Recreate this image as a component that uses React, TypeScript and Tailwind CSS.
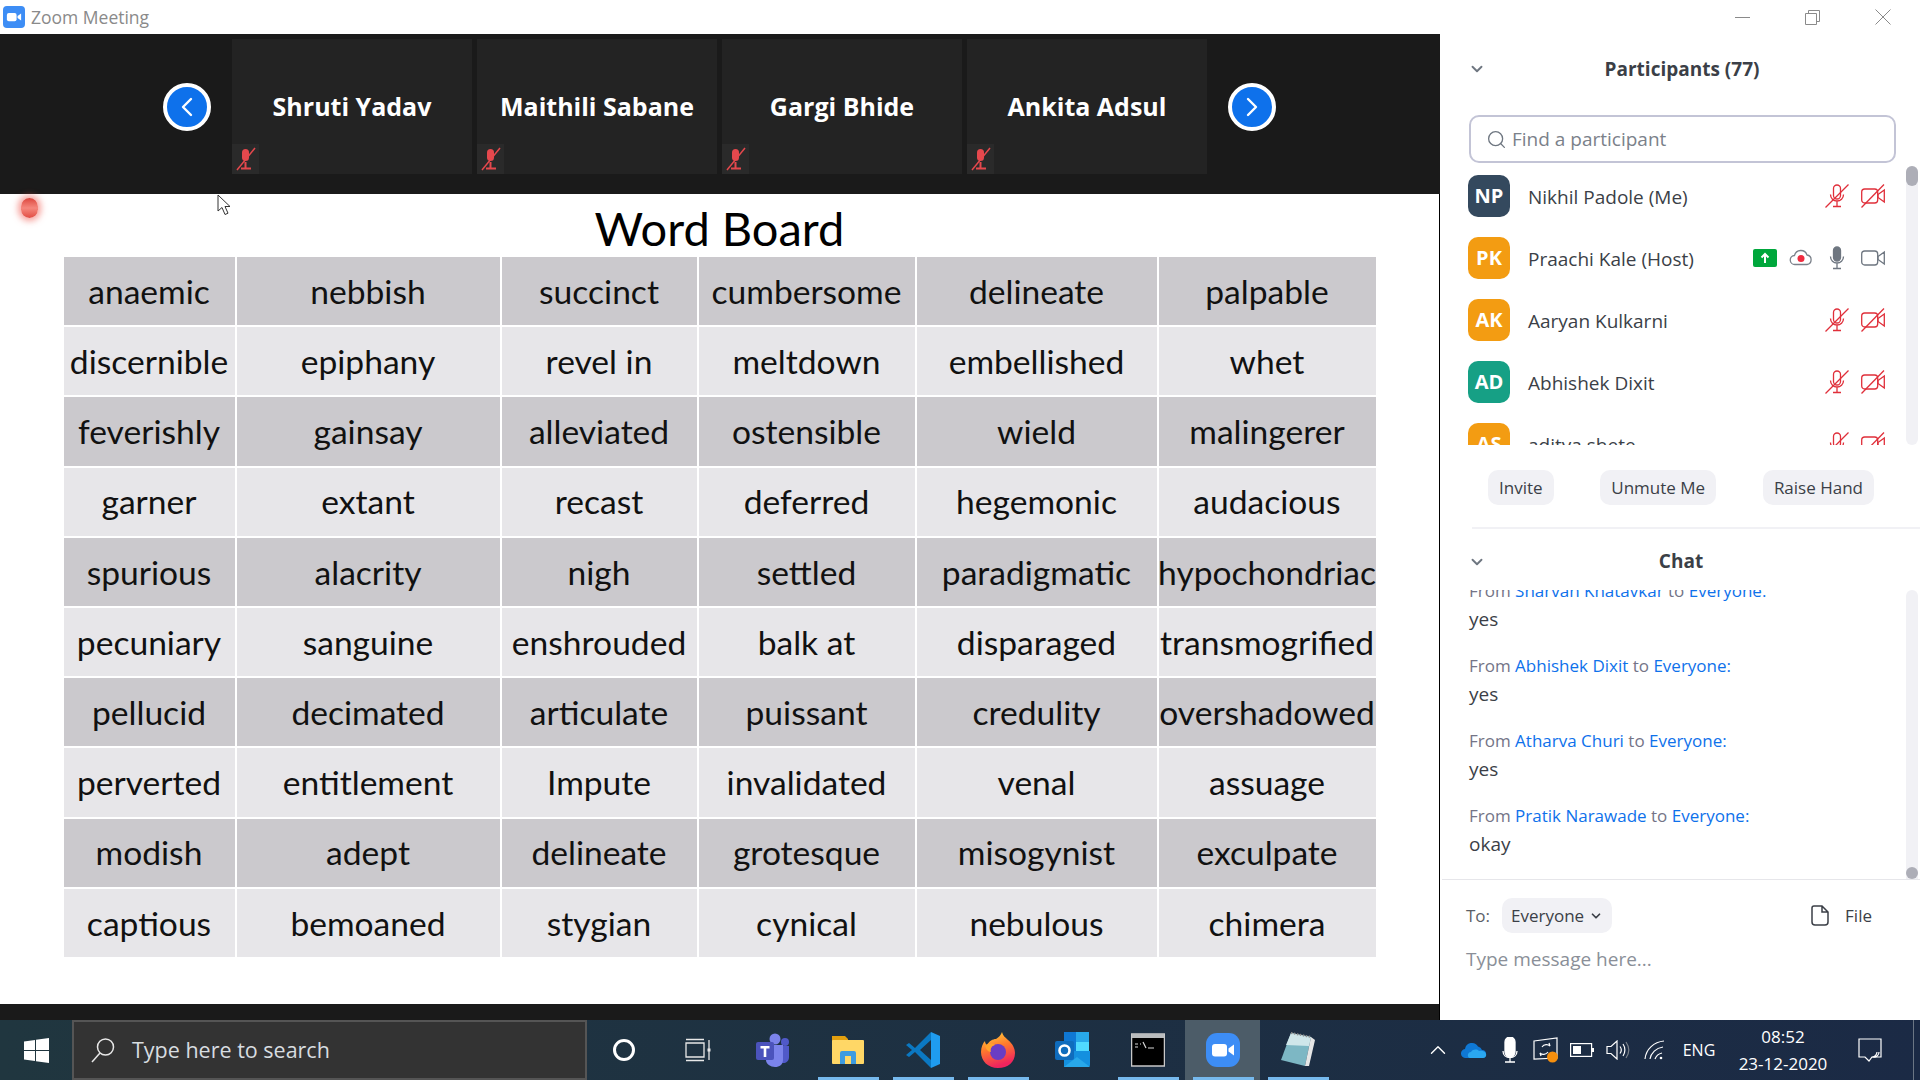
import { ChevronDown, ChevronLeft, ChevronRight, ChevronUp, Search } from 'lucide-react'

const ui = 'font-["Open_Sans",sans-serif]'

const words = [
  ['anaemic', 'nebbish', 'succinct', 'cumbersome', 'delineate', 'palpable'],
  ['discernible', 'epiphany', 'revel in', 'meltdown', 'embellished', 'whet'],
  ['feverishly', 'gainsay', 'alleviated', 'ostensible', 'wield', 'malingerer'],
  ['garner', 'extant', 'recast', 'deferred', 'hegemonic', 'audacious'],
  ['spurious', 'alacrity', 'nigh', 'settled', 'paradigmatic', 'hypochondriac'],
  ['pecuniary', 'sanguine', 'enshrouded', 'balk at', 'disparaged', 'transmogrified'],
  ['pellucid', 'decimated', 'articulate', 'puissant', 'credulity', 'overshadowed'],
  ['perverted', 'entitlement', 'Impute', 'invalidated', 'venal', 'assuage'],
  ['modish', 'adept', 'delineate', 'grotesque', 'misogynist', 'exculpate'],
  ['captious', 'bemoaned', 'stygian', 'cynical', 'nebulous', 'chimera'],
]

const thumbs = ['Shruti Yadav', 'Maithili Sabane', 'Gargi Bhide', 'Ankita Adsul']

const people = [
  { initials: 'NP', name: 'Nikhil Padole (Me)', color: 'bg-[#34495e]', host: false },
  { initials: 'PK', name: 'Praachi Kale (Host)', color: 'bg-[#f39c12]', host: true },
  { initials: 'AK', name: 'Aaryan Kulkarni', color: 'bg-[#f39c12]', host: false },
  { initials: 'AD', name: 'Abhishek Dixit', color: 'bg-[#16a085]', host: false },
  { initials: 'AS', name: 'aditya shete', color: 'bg-[#f39c12]', host: false },
]

const messages = [
  { from: 'Sharvan Khatavkar', text: 'yes' },
  { from: 'Abhishek Dixit', text: 'yes' },
  { from: 'Atharva Churi', text: 'yes' },
  { from: 'Pratik Narawade', text: 'okay' },
]

function ZoomLogo({ size, radius }: { size: number; radius: number }) {
  return (
    <svg width={size} height={size} viewBox="0 0 34 34">
      <rect width="34" height="34" rx={radius} fill="#3d8df5" />
      <rect x="6" y="11" width="15" height="12.5" rx="3" fill="#fff" />
      <path d="M22.5 15.5 28 11.5v11l-5.500-4z" fill="#fff" />
    </svg>
  )
}

function MutedMicSmall() {
  return (
    <svg width="22" height="24" viewBox="0 0 22 24" fill="none">
      <rect x="7" y="2" width="7" height="12" rx="3.500" fill="#e5484d" />
      <path d="M10.500 15v6M6 21.500h10" stroke="#e5484d" strokeWidth="2" />
      <path d="M20 1 2 23" stroke="#e5484d" strokeWidth="1.500" />
    </svg>
  )
}

function MicIcon({ muted }: { muted: boolean }) {
  const c = muted ? '#e02f3a' : '#6e7680'
  return (
    <svg width="24" height="24" viewBox="0 0 24 24" fill="none" stroke={c} strokeWidth="1.300">
      <rect x="8.500" y="1" width="7" height="14" rx="3.500" fill={muted ? 'none' : '#6e7680'} />
      <path d="M5.500 10.500c0 4 3 6.500 6.500 6.500s6.500-2.500 6.500-6.500M12 17v5M8 22.500h8" />
      {muted && <path d="M23.500 .5 .5 23.500" />}
    </svg>
  )
}

function VideoIcon({ muted }: { muted: boolean }) {
  const c = muted ? '#e02f3a' : '#6e7680'
  return (
    <svg width="24" height="24" viewBox="0 0 24 24" fill="none" stroke={c} strokeWidth="1.300">
      <rect x=".7" y="5" width="16" height="14" rx="3" />
      <path d="M17 10.500 23.300 6v12L17 13.500z" />
      {muted && <path d="M23 .5 .5 23.500" />}
    </svg>
  )
}

function TeamsIcon() {
  return (
    <svg width="36" height="36" viewBox="0 0 36 36">
      <circle cx="20" cy="7" r="5.500" fill="#7b83eb" />
      <circle cx="30" cy="10" r="4" fill="#5059c9" />
      <path d="M24 14h10v11c0 4-3 6-5.500 6S24 29 24 25z" fill="#5059c9" />
      <path d="M11 13h17v15c0 4.500-3.500 7-8 7s-9-3-9-7z" fill="#7b83eb" />
      <rect x="1" y="10" width="18" height="18" rx="2" fill="#4b53bc" />
      <path d="M5.500 14h9v2.500h-3.200V25H8.700v-8.500H5.500z" fill="#fff" />
    </svg>
  )
}

function FolderIcon() {
  return (
    <svg width="34" height="34" viewBox="0 0 34 34">
      <path d="M1 3h13l3 3v4H1z" fill="#e2a00f" />
      <rect x="1" y="7" width="32" height="24" rx="1" fill="#ffd766" />
      <path d="M9 31V20a2 2 0 0 1 2-2h12a2 2 0 0 1 2 2v11h-5v-8h-6v8z" fill="#3d9be0" />
    </svg>
  )
}

function VsCodeIcon() {
  return (
    <svg width="36" height="38" viewBox="0 0 36 38">
      <path d="M26 1 35 5v28l-9 4z" fill="#1f9cf0" />
      <path d="M26 1 10 17l-6-5-3 2 6 5-6 5 3 2 6-5 16 16 0-8-11-10L26 9z" fill="#0b78c2" />
    </svg>
  )
}

function FirefoxIcon() {
  return (
    <svg width="36" height="38" viewBox="0 0 36 38">
      <defs>
        <linearGradient id="fx" x1="0" y1="0" x2="0.300" y2="1">
          <stop offset="0" stopColor="#ffdc3d" />
          <stop offset="0.500" stopColor="#ff7a2c" />
          <stop offset="1" stopColor="#f0245e" />
        </linearGradient>
      </defs>
      <path d="M22 1c1 4 3 5 6 8 5 4 7 9 7 13 0 9-7 15-17 15C8 37 1 30 1 21c0-5 2-9 4-11 0 2 1 3 2 4 2-4 6-6 9-6 3-2 5-4 6-7z" fill="url(#fx)" />
      <circle cx="18" cy="21" r="8" fill="#6a3dc4" />
      <path d="M5 15c3-3 7-3 10-1-4 1-5 4-4 7-3 0-5-3-6-6z" fill="#ffa22b" />
    </svg>
  )
}

function OutlookIcon() {
  return (
    <svg width="36" height="38" viewBox="0 0 36 38">
      <rect x="9" y="1" width="25" height="19" fill="#0f78d4" />
      <rect x="21" y="1" width="13" height="10" fill="#28a8ea" />
      <rect x="21" y="11" width="13" height="9" fill="#50d9ff" />
      <path d="M9 20h26v14a2 2 0 0 1-2 2H9z" fill="#1490df" />
      <path d="M9 36l13-10 13 10z" fill="#28a8ea" />
      <rect x="0" y="10" width="19" height="19" rx="2" fill="#0f6cbd" />
      <circle cx="9.500" cy="19.500" r="5" fill="none" stroke="#fff" strokeWidth="2.600" />
    </svg>
  )
}

function CmdIcon() {
  return (
    <svg width="34" height="34" viewBox="0 0 34 34">
      <rect x=".5" y="1" width="33" height="32" fill="#000" stroke="#c9c9c9" strokeWidth="1.500" />
      <rect x="1" y="1" width="32" height="4" fill="#b9bcbe" />
      <path d="M4 11h3M9 11h1M4 14h3M12 9l3 6M17 15h6" stroke="#d8d8d8" strokeWidth="1.200" />
    </svg>
  )
}

function NotepadIcon() {
  return (
    <svg width="36" height="38" viewBox="0 0 36 38">
      <path d="M11 2 31 6 25 35 1 29z" fill="#7db7c4" />
      <path d="M11 2 31 6 29 15 6 14z" fill="#cfe6ea" />
      <path d="M31 6 35 9 29 35 25 35z" fill="#e6e6e6" />
      <path d="M11 2 31 6" stroke="#8d8d8d" strokeWidth="2" strokeDasharray="1.500 1.500" />
    </svg>
  )
}

const taskApps = [
  { key: 'teams', icon: <TeamsIcon />, line: false },
  { key: 'folder', icon: <FolderIcon />, line: true },
  { key: 'code', icon: <VsCodeIcon />, line: true },
  { key: 'firefox', icon: <FirefoxIcon />, line: true },
  { key: 'outlook', icon: <OutlookIcon />, line: false },
  { key: 'cmd', icon: <CmdIcon />, line: true },
  { key: 'zoom', icon: <ZoomLogo size={34} radius={11} />, line: true, active: true },
  { key: 'notepad', icon: <NotepadIcon />, line: true },
]

function Thumb({ name }: { name: string }) {
  return (
    <div className="relative flex h-[135px] w-[240px] items-center justify-center bg-[#232323]">
      <span className="text-[25px] font-bold text-white">{name}</span>
      <div className="absolute bottom-0 left-0 flex h-[30px] w-[27px] items-center justify-center bg-[#2a2a2a]">
        <MutedMicSmall />
      </div>
    </div>
  )
}

function ArrowButton({ right }: { right?: boolean }) {
  const Icon = right ? ChevronRight : ChevronLeft
  return (
    <div className="flex h-[48px] w-[48px] items-center justify-center rounded-full border-[4px] border-white bg-[#0e71eb]">
      <Icon size={32} strokeWidth={1.800} className="text-white" />
    </div>
  )
}

function Participant({ p }: { p: (typeof people)[number] }) {
  return (
    <div className="flex h-[62px] shrink-0 items-center pr-[21px]">
      <div className={`${p.color} mb-[2px] flex h-[42px] w-[42px] items-center justify-center rounded-[10px] text-[20px] font-bold text-white`}>
        {p.initials}
      </div>
      <span className="ml-[18px] flex-1 text-[19px] text-[#3b3f47]">{p.name}</span>
      {p.host && (
        <div className="mb-[2px] flex items-center gap-[12px]">
          <div className="flex h-[18px] w-[24px] items-center justify-center rounded-[2px] bg-[#00a73c]">
            <svg width="10" height="12" viewBox="0 0 10 12" fill="none" stroke="#fff" strokeWidth="2">
              <path d="M5 11V2M1.500 5.500 5 2l3.500 3.500" />
            </svg>
          </div>
          <svg width="24" height="18" viewBox="0 0 24 18" fill="none">
            <path d="M6 15.500a4.500 4.500 0 0 1-.5-9A6.500 6.500 0 0 1 18 6a4.800 4.800 0 0 1 0 9.500z" stroke="#7b818a" strokeWidth="1.300" />
            <circle cx="12" cy="9.500" r="3.500" fill="#f02b3f" />
          </svg>
        </div>
      )}
      <div className={`mb-[2px] flex items-center gap-[12px] ${p.host ? 'ml-[12px]' : ''}`}>
        <MicIcon muted={!p.host} />
        <VideoIcon muted={!p.host} />
      </div>
    </div>
  )
}

function Participants() {
  return (
    <section className="flex flex-col">
      <div className="relative flex h-[70px] items-center justify-center">
        <ChevronDown size={18} strokeWidth={2.500} className="absolute left-[28px] top-[26px] text-[#6e7680]" />
        <h2 className="pl-[4px] text-[19px] font-bold text-[#3b3f47]">Participants (77)</h2>
      </div>
      <div className="mb-[3px] ml-[29px] mr-[24px] mt-[11px] flex h-[48px] items-center rounded-[10px] border-2 border-[#c3c4d6] pl-[15px]">
        <Search size={21} strokeWidth={1.500} className="text-[#6e7680]" />
        <span className="ml-[5px] text-[19px] text-[#7b818a]">Find a participant</span>
      </div>
      <div className="flex h-[279px]">
        <div className="flex flex-1 flex-col overflow-hidden pl-[28px]">
          {people.map(p => (
            <Participant key={p.initials} p={p} />
          ))}
        </div>
        <div className="mr-[2px] w-[12px] rounded-[6px] bg-[#f1f1f5]">
          <div className="h-[20px] rounded-[6px] bg-[#adaeb7]" />
        </div>
      </div>
      <div className="ml-[48px] mr-[46px] mt-[25px] flex justify-between">
        {['Invite', 'Unmute Me', 'Raise Hand'].map(label => (
          <div key={label} className="flex h-[35px] items-center rounded-[10px] bg-[#f1f1f5] px-[11px] text-[17px] text-[#3b3f47]">
            {label}
          </div>
        ))}
      </div>
      <div className="ml-[32px] mt-[22px] h-[2px] bg-[#f1f1f5]" />
    </section>
  )
}

function Chat() {
  return (
    <section className="flex flex-1 flex-col">
      <div className="relative flex h-[61px] items-center justify-center pt-[3px]">
        <ChevronDown size={18} strokeWidth={2.500} className="absolute left-[28px] top-[24px] text-[#6e7680]" />
        <h2 className="pl-[2px] text-[19px] font-bold text-[#3b3f47]">Chat</h2>
      </div>
      <div className="flex h-[289px]">
        <div className="flex flex-1 flex-col justify-end gap-[19px] overflow-hidden pb-[21px] pl-[29px]">
          {messages.map(m => (
            <div key={m.from} className="shrink-0">
              <div className="h-[28px] text-[17px] leading-[28px] text-[#747487]">
                From <span className="text-[#0e71eb]">{m.from}</span> to <span className="text-[#0e71eb]">Everyone:</span>
              </div>
              <div className="h-[28px] text-[19px] leading-[28px] text-[#3b3f47]">{m.text}</div>
            </div>
          ))}
        </div>
        <div className="mr-[2px] flex w-[12px] flex-col justify-end rounded-t-[6px] bg-[#f1f1f5]">
          <div className="h-[12px] rounded-full bg-[#adaeb7]" />
        </div>
      </div>
      <div className="ml-[2px] h-[1px] bg-[#e6e6ea]" />
      <div className="mt-[18px] flex items-center pl-[26px] pr-[48px]">
        <span className="text-[17px] text-[#5b5f68]">To:</span>
        <div className="ml-[12px] flex h-[35px] w-[110px] items-center justify-center gap-[5px] rounded-[10px] bg-[#f1f1f5] text-[17px] text-[#3b3f47]">
          Everyone
          <ChevronDown size={14} strokeWidth={3} />
        </div>
        <div className="ml-auto flex items-center gap-[16px]">
          <svg width="18" height="21" viewBox="0 0 18 21" fill="none" stroke="#3b3f47" strokeWidth="1.500">
            <path d="M3 1h8l6 6v10a3 3 0 0 1-3 3H4a3 3 0 0 1-3-3V3a2 2 0 0 1 2-2zM11 1v6h6" />
          </svg>
          <span className="text-[17px] text-[#3b3f47]">File</span>
        </div>
      </div>
      <div className="mt-[12px] pl-[26px] text-[19px] text-[#8a8f98]">Type message here...</div>
    </section>
  )
}

function Slide() {
  return (
    <div className="relative flex flex-1 flex-col items-center border-r border-black bg-white font-['Lato',sans-serif]">
      {/* recording dot and the presenter's pointer sit on top of the slide */}
      <div className="absolute left-[21px] top-[4px] h-[20px] w-[17px] rounded-full bg-gradient-to-b from-[#dc443d] via-[#f5877d] to-[#e14b43] shadow-[0_0_6px_3px_rgba(240,90,80,0.55)]" />
      <svg className="absolute left-[217px] top-[0px]" width="16" height="22" viewBox="0 0 16 22">
        <path d="M1 1v16l4-3.500 3 7 3-1.300-3-6.700h5z" fill="#fff" stroke="#333" strokeWidth="1" />
      </svg>
      <h1 className="mt-[5px] h-[58px] text-[47px] leading-[58px] text-black">Word Board</h1>
      <div className="grid grid-cols-[171px_263px_195px_216px_240px_217px] gap-x-[2px] gap-y-[2px]">
        {words.flatMap((row, r) =>
          row.map((w, c) => (
            <div
              key={`${r}-${c}`}
              className={`flex h-[68.2px] items-center justify-center overflow-hidden whitespace-nowrap text-[33.6px] text-[#111] ${r % 2 === 0 ? 'bg-[#cbc9cd]' : 'bg-[#e7e6e9]'}`}
            >
              {w}
            </div>
          )),
        )}
      </div>
      <div className="mt-auto h-[16px] w-full bg-[#1a1a1a]" />
    </div>
  )
}

function Taskbar() {
  return (
    <footer className="flex h-[60px] items-center bg-gradient-to-r from-[#20363f] to-[#1b2a45] text-white">
      <div className="flex h-full w-[72px] items-center justify-center">
        <svg width="25" height="25" viewBox="0 0 25 25" fill="#fff">
          <path d="M0 3.500 11 2v10H0zM12 1.800 25 0v12H12zM0 13h11v10L0 21.500zM12 13h13v12l-13-1.800z" />
        </svg>
      </div>
      <div className="flex h-full w-[515px] items-center border-2 border-[#555] bg-[#333] pl-[16px]">
        <svg width="26" height="26" viewBox="0 0 26 26" fill="none" stroke="#e8e8e8" strokeWidth="1.500">
          <circle cx="15.500" cy="10" r="8" />
          <path d="M10 16 2 25" />
        </svg>
        <span className="ml-[16px] text-[21.5px] text-[#d8dde0]">Type here to search</span>
      </div>
      <div className="flex h-full w-[74px] items-center justify-center">
        <div className="h-[22px] w-[22px] rounded-full border-[3px] border-white" />
      </div>
      <div className="flex h-full w-[74px] items-center justify-center">
        <svg width="26" height="24" viewBox="0 0 26 24" fill="none" stroke="#e8e8e8" strokeWidth="1.300">
          <path d="M1 1.500h18M1 22.500h18M1 5h18v14H1zM24 2v20" />
          <rect x="22.500" y="10.500" width="3" height="3" fill="#e8e8e8" stroke="none" />
        </svg>
      </div>
      {taskApps.map(app => (
        <div
          key={app.key}
          className={`relative flex h-full w-[75px] items-center justify-center ${app.active ? 'bg-[#4c5c68]' : ''}`}
        >
          {app.icon}
          {app.line && <div className="absolute bottom-0 left-[8px] right-[6px] h-[3px] bg-[#76b9ed]" />}
        </div>
      ))}
      <div className="ml-[85px] flex h-full items-center">
        <div className="flex w-[36px] justify-center">
          <ChevronUp size={26} strokeWidth={1.300} />
        </div>
        <div className="flex w-[36px] justify-center">
          <svg width="26" height="18" viewBox="0 0 26 18">
            <path d="M5 17a4.500 4.500 0 0 1-1-9A7 7 0 0 1 17 5.500a5.500 5.500 0 0 1 4 3.500 4 4 0 0 1 0 8z" fill="#0f78d4" />
            <path d="M9 17c-3 0-3-6 1-6 2-3 6-3 8-1 5-1 8 2 7 5-.5 1-1.500 2-3 2z" fill="#2aa7f0" />
          </svg>
        </div>
        <div className="flex w-[35px] justify-center">
          <svg width="16" height="26" viewBox="0 0 16 26" fill="none" stroke="#fff" strokeWidth="1.300">
            <rect x="3" y="0" width="10" height="20" rx="5" fill="#fff" />
            <path d="M1 14c0 4 3 6.500 7 6.500s7-2.500 7-6.500M8 20v5M3 25h10" />
          </svg>
        </div>
        <div className="flex w-[37px] justify-center">
          <svg width="26" height="26" viewBox="0 0 26 26" fill="none">
            <path d="M1 4 24 1v20L1 22z" stroke="#fff" strokeWidth="1.200" />
            <path d="M9 10c2-3 6-3 8-1l-1-3M15 15c-2 3-6 3-8 1l1 3" stroke="#fff" strokeWidth="1.200" />
            <circle cx="19.500" cy="20" r="5.500" fill="#f7900e" />
          </svg>
        </div>
        <div className="flex w-[36px] justify-center">
          <svg width="24" height="14" viewBox="0 0 24 14" fill="none">
            <rect x=".6" y=".6" width="21" height="12.800" stroke="#fff" strokeWidth="1.200" />
            <rect x="3" y="3" width="8" height="8" fill="#fff" />
            <rect x="22" y="5" width="2" height="4" fill="#fff" />
          </svg>
        </div>
        <div className="flex w-[35px] justify-center">
          <svg width="24" height="20" viewBox="0 0 24 20" fill="none" stroke="#fff" strokeWidth="1.200">
            <path d="M1 6.500h4L11 1v18l-6-5.500H1z" />
            <path d="M14 6.500c1.500 2 1.500 5 0 7M17 4c2.500 3.500 2.500 8.500 0 12" />
            <path d="M20 2c3.500 5 3.500 11 0 16" stroke="#7b818a" />
          </svg>
        </div>
        <div className="flex w-[40px] justify-center">
          <svg width="22" height="20" viewBox="0 0 22 20" fill="none" stroke="#fff" strokeWidth="1.200">
            <path d="M1 19C2 9 10 2 20 1M6 19c1-6 6-11 13-12M11 19c1-3 3-5 7-6" />
            <circle cx="17" cy="18" r="1.300" fill="#fff" stroke="none" />
          </svg>
        </div>
        <div className="w-[48px] text-center text-[16px]">ENG</div>
        <div className="w-[120px] text-center text-[17px] leading-[27px]">
          <div>08:52</div>
          <div>23-12-2020</div>
        </div>
        <div className="flex w-[54px] justify-center">
          <svg width="24" height="24" viewBox="0 0 24 24" fill="none" stroke="#fff" strokeWidth="1.200">
            <path d="M1 1h22v18h-5l-4 0-3 4-4-4H1z" />
            <path d="M21 14a5 5 0 0 1-6 5 6 6 0 0 0 4-5" />
          </svg>
        </div>
        <div className="ml-[16px] h-full w-[1px] bg-[#6b7684]" />
      </div>
    </footer>
  )
}

export default function App() {
  return (
    <div className={`${ui} flex h-[1080px] w-[1920px] flex-col overflow-hidden bg-white`}>
      <header className="flex h-[34px] items-center pl-[3px]">
        <ZoomLogo size={22} radius={6} />
        <span className="ml-[6px] text-[17.5px] text-[#8a8a8a]">Zoom Meeting</span>
        <div className="ml-auto flex items-center gap-[55px] pr-[29px]">
          <div className="h-[1px] w-[15px] bg-[#8a8a8a]" />
          <svg width="15" height="15" viewBox="0 0 15 15" fill="none" stroke="#8a8a8a">
            <path d="M.5 3.500h11v11H.5zM3.500 3.500v-3h11v11h-3" />
          </svg>
          <svg width="16" height="16" viewBox="0 0 16 16" stroke="#8a8a8a">
            <path d="M.5.5l15 15M15.500.5l-15 15" />
          </svg>
        </div>
      </header>
      <div className="flex flex-1">
        <main className="flex w-[1440px] flex-col">
          <div className="flex h-[160px] items-start gap-[21px] bg-[#1a1a1a] pl-[163px] pt-[5px]">
            <div className="flex h-[135px] items-center">
              <ArrowButton />
            </div>
            <div className="flex gap-[5px]">
              {thumbs.map(name => (
                <Thumb key={name} name={name} />
              ))}
            </div>
            <div className="flex h-[135px] items-center">
              <ArrowButton right />
            </div>
          </div>
          <Slide />
        </main>
        <aside className="flex w-[480px] flex-col">
          <Participants />
          <Chat />
        </aside>
      </div>
      <Taskbar />
    </div>
  )
}
